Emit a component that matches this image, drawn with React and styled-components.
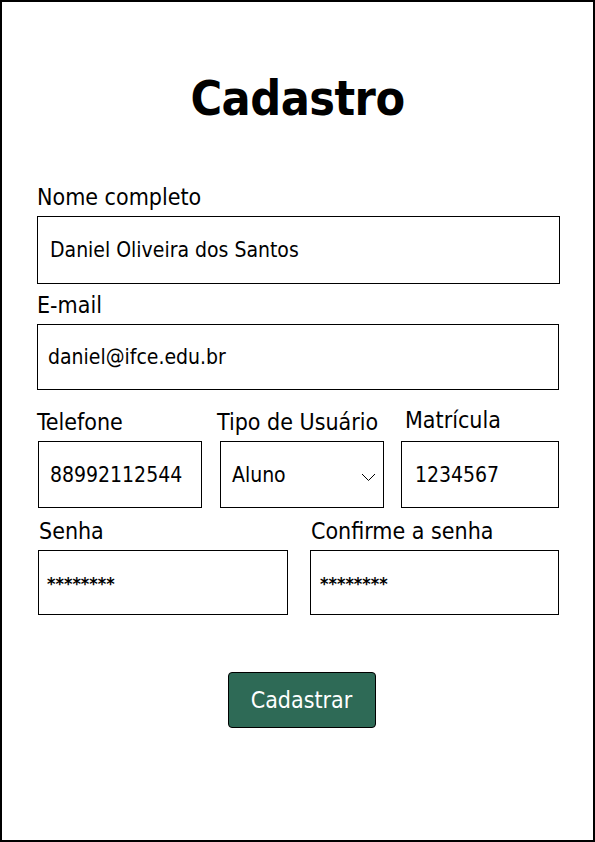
import styled, { createGlobalStyle } from 'styled-components'

const GlobalStyle = createGlobalStyle`
  html, body {
    margin: 0;
    padding: 0;
    background: #ffffff;
  }
  * {
    box-sizing: border-box;
  }
`

const FONT = `"Liberation Sans Narrow", "DejaVu Sans Condensed", "Liberation Sans", sans-serif`

const Frame = styled.div`
  width: 595px;
  height: 842px;
  border: 2px solid #000;
  background: #fff;
  font-family: ${FONT};
  color: #000;
  display: flex;
  flex-direction: column;
`

const Title = styled.h1`
  margin: 68px 0 0;
  font-size: 48px;
  line-height: 56px;
  font-weight: 700;
  text-align: center;
  letter-spacing: -0.5px;
`

const Row = styled.div`
  display: flex;
  align-items: flex-start;
  margin-top: ${p => p.$top || 0}px;
`

const Field = styled.div`
  display: flex;
  flex-direction: column;
  width: ${p => p.$width}px;
  margin-left: ${p => p.$left || 0}px;
`

const Label = styled.label`
  font-size: 23px;
  line-height: 28px;
  margin-left: ${p => p.$shift || 0}px;
  margin-top: ${p => p.$lift || 0}px;
  margin-bottom: ${p => p.$gap ?? 5}px;
  white-space: nowrap;
`

const Box = styled.div`
  height: ${p => p.$height || 67}px;
  border: 1px solid #000;
  display: flex;
  align-items: center;
  justify-content: space-between;
  padding: 0 ${p => p.$padRight || 12}px 0 ${p => p.$pad || 12}px;
  font-size: 21px;
  white-space: nowrap;
`

const Masked = styled.span`
  font-size: 18px;
  font-weight: 700;
  margin-top: 2px;
`

const Chevron = () => (
  <svg width="15" height="9" viewBox="0 0 15 9" style={{ marginTop: 6 }}>
    <polyline points="1,1 7.5,7.5 14,1" fill="none" stroke="#000" strokeWidth="1" />
  </svg>
)

const ButtonRow = styled.div`
  display: flex;
  justify-content: center;
  margin-top: 57px;
  padding-left: 8px;
`

const Button = styled.button`
  width: 148px;
  height: 56px;
  background: #2e6a56;
  color: #fff;
  border: 1px solid #000;
  border-radius: 4px;
  font-family: ${FONT};
  font-size: 23px;
  cursor: pointer;
`

const App = () => {
  return (
    <>
      <GlobalStyle />
      <Frame>
        <Title>Cadastro</Title>

        <Row $top={57}>
          <Field $left={35} $width={523}>
            <Label>Nome completo</Label>
            <Box $height={68}>Daniel Oliveira dos Santos</Box>
          </Field>
        </Row>

        <Row $top={7}>
          <Field $left={35} $width={522}>
            <Label>E-mail</Label>
            <Box $height={66} $pad={10}>daniel@ifce.edu.br</Box>
          </Field>
        </Row>

        <Row $top={18}>
          <Field $left={36} $width={164}>
            <Label $shift={-1}>Telefone</Label>
            <Box $pad={11}>88992112544</Box>
          </Field>
          <Field $left={18} $width={164}>
            <Label $shift={-3}>Tipo de Usuário</Label>
            <Box $pad={11} $padRight={7}>
              Aluno
              <Chevron />
            </Box>
          </Field>
          <Field $left={17} $width={158}>
            <Label $shift={4} $lift={-2} $gap={7}>Matrícula</Label>
            <Box $pad={13}>1234567</Box>
          </Field>
        </Row>

        <Row $top={9}>
          <Field $left={36} $width={250}>
            <Label $shift={1}>Senha</Label>
            <Box $height={65} $pad={8}>
              <Masked>********</Masked>
            </Box>
          </Field>
          <Field $left={22} $width={249}>
            <Label $shift={1}>Confirme a senha</Label>
            <Box $height={65} $pad={9}>
              <Masked>********</Masked>
            </Box>
          </Field>
        </Row>

        <ButtonRow>
          <Button type="button">Cadastrar</Button>
        </ButtonRow>
      </Frame>
    </>
  )
}

export default App
